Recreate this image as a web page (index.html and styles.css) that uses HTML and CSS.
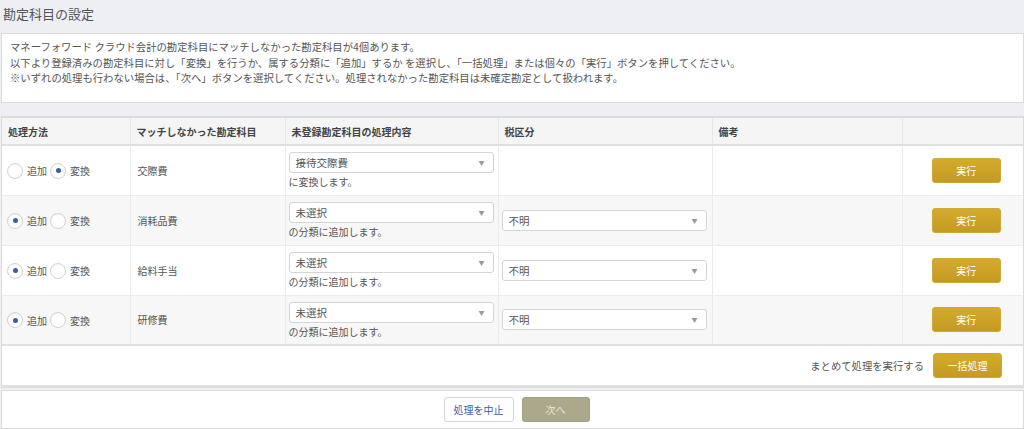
FILE: index.html
```html
<!DOCTYPE html>
<html lang="ja">
<head>
<meta charset="utf-8">
<title>勘定科目の設定</title>
<link rel="stylesheet" href="styles.css">
</head>
<body>
<div class="page">
  <h1 class="title">勘定科目の設定</h1>
  <div class="message">
    <p>マネーフォワード クラウド会計の勘定科目にマッチしなかった勘定科目が4個あります。</p>
    <p>以下より登録済みの勘定科目に対し「変換」を行うか、属する分類に「追加」するか を選択し、「一括処理」または個々の「実行」ボタンを押してください。</p>
    <p>※いずれの処理も行わない場合は、「次へ」ボタンを選択してください。処理されなかった勘定科目は未確定勘定として扱われます。</p>
  </div>

  <div class="panel">
    <table class="grid">
      <colgroup>
        <col class="c1"><col class="c2"><col class="c3"><col class="c4"><col class="c5"><col class="c6">
      </colgroup>
      <thead>
        <tr>
          <th>処理方法</th>
          <th>マッチしなかった勘定科目</th>
          <th>未登録勘定科目の処理内容</th>
          <th>税区分</th>
          <th>備考</th>
          <th></th>
        </tr>
      </thead>
      <tbody>
        <tr>
          <td><span class="radio"></span><span class="rlabel">追加</span><span class="radio on"></span><span class="rlabel">変換</span></td>
          <td class="name">交際費</td>
          <td><div class="select">接待交際費<span class="arrow">▼</span></div><div class="note">に変換します。</div></td>
          <td></td>
          <td></td>
          <td class="act"><button class="gold">実行</button></td>
        </tr>
        <tr class="alt">
          <td><span class="radio on"></span><span class="rlabel">追加</span><span class="radio"></span><span class="rlabel">変換</span></td>
          <td class="name">消耗品費</td>
          <td><div class="select">未選択<span class="arrow">▼</span></div><div class="note">の分類に追加します。</div></td>
          <td><div class="select tax">不明<span class="arrow">▼</span></div></td>
          <td></td>
          <td class="act"><button class="gold">実行</button></td>
        </tr>
        <tr>
          <td><span class="radio on"></span><span class="rlabel">追加</span><span class="radio"></span><span class="rlabel">変換</span></td>
          <td class="name">給料手当</td>
          <td><div class="select">未選択<span class="arrow">▼</span></div><div class="note">の分類に追加します。</div></td>
          <td><div class="select tax">不明<span class="arrow">▼</span></div></td>
          <td></td>
          <td class="act"><button class="gold">実行</button></td>
        </tr>
        <tr class="alt">
          <td><span class="radio on"></span><span class="rlabel">追加</span><span class="radio"></span><span class="rlabel">変換</span></td>
          <td class="name">研修費</td>
          <td><div class="select">未選択<span class="arrow">▼</span></div><div class="note">の分類に追加します。</div></td>
          <td><div class="select tax">不明<span class="arrow">▼</span></div></td>
          <td></td>
          <td class="act"><button class="gold">実行</button></td>
        </tr>
      </tbody>
    </table>
    <div class="bulk">
      <span class="bulk-text">まとめて処理を実行する</span>
      <button class="gold">一括処理</button>
    </div>
  </div>

  <div class="footer">
    <button class="cancel">処理を中止</button>
    <button class="next">次へ</button>
  </div>
</div>
</body>
</html>
```

FILE: styles.css
```css
* { box-sizing: border-box; }
html, body { margin: 0; padding: 0; }
body {
  background: #eeeff3;
  font-family: "Noto Sans CJK JP", "Noto Sans", sans-serif;
  color: #555;
  font-size: 10px;
  width: 1024px;
  height: 429px;
  overflow: hidden;
}
.page { padding: 0 0 0 1px; }
.title {
  margin: 0;
  height: 33px;
  padding: 4px 0 0 2px;
  font-size: 13px;
  font-weight: normal;
  color: #555;
  line-height: 20px;
}
.message {
  background: #fff;
  border: 1px solid #dcdcdc;
  height: 70px;
  padding: 5px 8px;
  line-height: 15.5px;
  color: #555;
  font-size: 10.35px;
}
.message p { margin: 0; }

.panel {
  margin-top: 13px;
  background: #fff;
  border: 1px solid #dcdcdc;
  border-top: 2px solid #dcdcdc;
}
.grid {
  width: 100%;
  border-collapse: collapse;
  table-layout: fixed;
}
.c1 { width: 128px; }
.c2 { width: 155px; }
.c3 { width: 213px; }
.c4 { width: 214px; }
.c5 { width: 190px; }
.c6 { width: auto; }
.grid th {
  background: #f5f5f5;
  height: 27px;
  text-align: left;
  font-weight: bold;
  color: #444;
  padding: 0 6px;
  border-right: 1px solid #e8e8e8;
  border-bottom: 2px solid #e0e0e0;
}
.grid th:last-child, .grid td:last-child { border-right: none; }
.grid td {
  height: 50px;
  padding: 0 3px;
  vertical-align: middle;
  border-right: 1px solid #ebebeb;
  border-bottom: 1px solid #ebebeb;
  background: #fff;
}
.grid tr.alt td { background: #f7f7f7; }
.grid tbody tr:last-child td { border-bottom: 2px solid #e0e0e0; }
.grid td:first-child { padding-left: 5px; }
.grid td.name { padding-left: 7px; }

.radio {
  display: inline-block;
  width: 16px;
  height: 16px;
  border: 1px solid #d2d2d2;
  border-radius: 50%;
  background: #fff;
  vertical-align: middle;
  position: relative;
  box-shadow: inset 0 1px 1px rgba(0,0,0,0.04);
}
.radio.on::after {
  content: "";
  position: absolute;
  left: 4.5px;
  top: 4.5px;
  width: 5px;
  height: 5px;
  border-radius: 50%;
  background: #3b5ca8;
}
.rlabel {
  display: inline-block;
  vertical-align: middle;
  margin: 0 3px 0 4px;
  color: #555;
}

.select {
  position: relative;
  width: 205px;
  height: 21px;
  border: 1px solid #d5d5d5;
  border-radius: 3px;
  background: #fff;
  line-height: 19px;
  padding: 0 6px;
  color: #555;
  font-size: 10.5px;
}
.select .arrow {
  position: absolute;
  right: 8px;
  top: 0;
  font-size: 6px;
  color: #999;
}
.note { margin-top: 2px; line-height: 13px; color: #555; }

.act { text-align: center; }
.gold {
  font-family: inherit;
  width: 69px;
  height: 25px;
  border: 1px solid #ccaa3a;
  border-radius: 3px;
  background: linear-gradient(#d4ab2c, #c49a23);
  color: #fff;
  font-size: 10px;
  padding: 0;
  cursor: pointer;
}
.act .gold { margin-left: 7px; }

.bulk {
  height: 41px;
  display: flex;
  align-items: center;
  justify-content: flex-end;
  padding-right: 21px;
  border-bottom: 2px solid #e0e0e0;
}
.bulk-text { margin-right: 9px; color: #555; font-size: 10.35px; }

.footer {
  margin-top: 2px;
  background: #fff;
  border: 1px solid #dcdcdc;
  height: 39px;
  display: flex;
  justify-content: center;
  align-items: center;
  gap: 8px;
  padding-left: 8px;
}
.cancel {
  font-family: inherit;
  width: 70px;
  height: 25px;
  background: #fff;
  border: 1px solid #d5d5d5;
  border-radius: 3px;
  color: #3e5ea4;
  font-size: 10px;
  padding: 0;
}
.next {
  font-family: inherit;
  width: 68px;
  height: 25px;
  background: #aba88b;
  border: 1px solid #a4a185;
  border-radius: 3px;
  color: #e8e6da;
  font-size: 10px;
  padding: 0;
}
```
